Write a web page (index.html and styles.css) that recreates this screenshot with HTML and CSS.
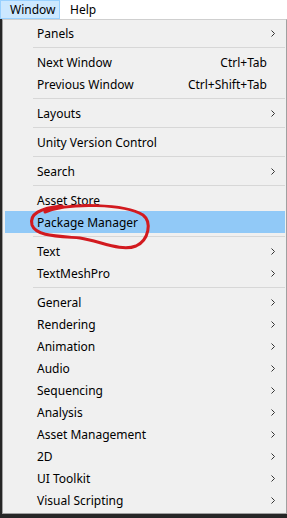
FILE: index.html
```html
<!DOCTYPE html>
<html lang="en">

<head>
    <meta charset="utf-8">
    <link rel="stylesheet" href="styles.css">
</head>

<body>
    <div class="menubar">
        <span class="menubar-item active">Window</span>
        <span class="menubar-item">Help</span>
    </div>

    <div class="menu">
        <div class="menu-item sub">Panels</div>
        <div class="menu-sep"></div>
        <div class="menu-item">Next Window<span class="shortcut">Ctrl+Tab</span></div>
        <div class="menu-item">Previous Window<span class="shortcut">Ctrl+Shift+Tab</span></div>
        <div class="menu-sep"></div>
        <div class="menu-item sub">Layouts</div>
        <div class="menu-sep"></div>
        <div class="menu-item">Unity Version Control</div>
        <div class="menu-sep"></div>
        <div class="menu-item sub">Search</div>
        <div class="menu-sep"></div>
        <div class="menu-item">Asset Store</div>
        <div class="menu-item selected">Package Manager</div>
        <div class="menu-sep"></div>
        <div class="menu-item sub">Text</div>
        <div class="menu-item sub">TextMeshPro</div>
        <div class="menu-sep"></div>
        <div class="menu-item sub">General</div>
        <div class="menu-item sub">Rendering</div>
        <div class="menu-item sub">Animation</div>
        <div class="menu-item sub">Audio</div>
        <div class="menu-item sub">Sequencing</div>
        <div class="menu-item sub">Analysis</div>
        <div class="menu-item sub">Asset Management</div>
        <div class="menu-item sub">2D</div>
        <div class="menu-item sub">UI Toolkit</div>
        <div class="menu-item sub">Visual Scripting</div>
    </div>

    <!-- hand drawn annotation around Package Manager -->
    <svg class="scribble" width="287" height="518" viewBox="0 0 287 518">
        <path d="M45 212 C70 202, 125 204, 143 215 C152 222, 149 240, 136 246 C121 252, 100 241, 80 238 C55 236, 36 236, 32 225 C29 214, 40 208, 62 206" />
    </svg>
</body>

</html>
```

FILE: styles.css
```css
body {
    font-family: "Noto Sans", "Noto Sans CJK KR", sans-serif;
    font-size: 12px;
    color: #000;
    margin: 0;
    padding: 0;
    background-color: #262626;
    height: 518px;
    overflow: hidden;
    position: relative;
}

.menubar {
    display: flex;
    height: 19px;
    background-color: #fff;
}

.menubar-item {
    display: flex;
    align-items: center;
    padding: 0 7px 0 9px;
    border: 1px solid transparent;
    box-sizing: border-box;
    height: 19px;
}

.menubar-item.active {
    background-color: #cce8ff;
    border-color: #99d1ff;
    width: 60px;
}

.menu {
    margin-left: 2px;
    width: 285px;
    box-sizing: border-box;
    background-color: #f0f0f0;
    border: 1px solid #a0a0a0;
    border-top-color: #cfcfcf;
    padding: 2px 1px 2px 2px;
}

.menu-item {
    display: flex;
    align-items: center;
    height: 22px;
    padding: 0 10px 0 32px;
    white-space: nowrap;
}

.menu-item.selected {
    background-color: #91c9f7;
}

.menu-item .shortcut {
    margin-left: auto;
    padding-right: 8px;
}

.menu-item.sub::after {
    content: "";
    margin-left: auto;
    width: 4px;
    height: 7px;
    background: url("data:image/svg+xml;utf8,<svg xmlns='http://www.w3.org/2000/svg' width='4' height='7' viewBox='0 0 4 7'><path d='M0.5 0.5 L3.5 3.5 L0.5 6.5' fill='none' stroke='%23333' stroke-width='1'/></svg>") no-repeat;
}

.menu-sep {
    height: 7px;
    margin-left: 28px;
    background: linear-gradient(#d7d7d7, #d7d7d7) no-repeat 0 3px / 100% 1px;
}

.scribble {
    position: absolute;
    left: 0;
    top: 0;
    pointer-events: none;
}

.scribble path {
    fill: none;
    stroke: #d21a1f;
    stroke-width: 3;
    stroke-linecap: round;
}
```
